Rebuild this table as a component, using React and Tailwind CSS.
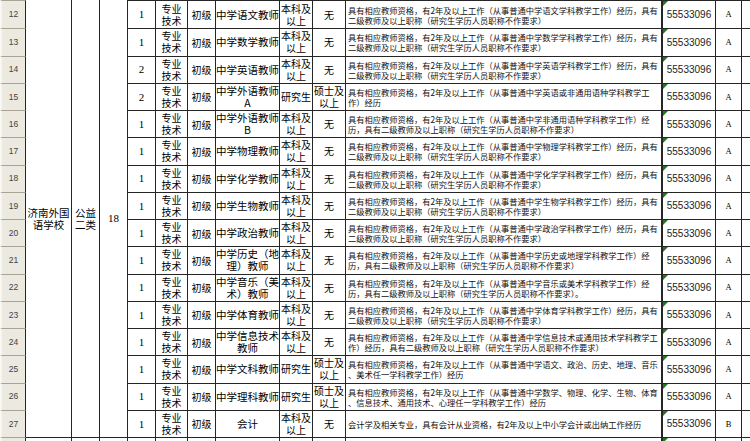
import React from "react";

const teachReq = (subject) => [
  `具有相应教师资格，有2年及以上工作（从事普通中学${subject}学科教学工作）经历，具有`,
  "二级教师及以上职称（研究生学历人员职称不作要求）",
];

const rows = [
  { n: 12, count: 1, pos: ["中学语文教师"], edu: ["本科及", "以上"], deg: ["无"], req: teachReq("语文"), cls: "A" },
  { n: 13, count: 1, pos: ["中学数学教师"], edu: ["本科及", "以上"], deg: ["无"], req: teachReq("数学"), cls: "A" },
  { n: 14, count: 2, pos: ["中学英语教师"], edu: ["本科及", "以上"], deg: ["无"], req: teachReq("英语"), cls: "A" },
  {
    n: 15, count: 2, pos: ["中学外语教师", "A"], edu: ["研究生"], deg: ["硕士及", "以上"],
    req: ["具有相应教师资格，有2年及以上工作（从事普通中学英语或非通用语种学科教学工", "作）经历"], cls: "A",
  },
  {
    n: 16, count: 1, pos: ["中学外语教师", "B"], edu: ["本科及", "以上"], deg: ["无"],
    req: ["具有相应教师资格，有2年及以上工作（从事普通中学非通用语种学科教学工作）经", "历，具有二级教师及以上职称（研究生学历人员职称不作要求）"], cls: "A",
  },
  { n: 17, count: 1, pos: ["中学物理教师"], edu: ["本科及", "以上"], deg: ["无"], req: teachReq("物理"), cls: "A" },
  { n: 18, count: 1, pos: ["中学化学教师"], edu: ["本科及", "以上"], deg: ["无"], req: teachReq("化学"), cls: "A" },
  { n: 19, count: 1, pos: ["中学生物教师"], edu: ["本科及", "以上"], deg: ["无"], req: teachReq("生物"), cls: "A" },
  { n: 20, count: 1, pos: ["中学政治教师"], edu: ["本科及", "以上"], deg: ["无"], req: teachReq("政治"), cls: "A" },
  {
    n: 21, count: 1, pos: ["中学历史（地", "理）教师"], edu: ["本科及", "以上"], deg: ["无"],
    req: ["具有相应教师资格，有2年及以上工作（从事普通中学历史或地理学科教学工作）经", "历，具有二级教师及以上职称（研究生学历人员职称不作要求）"], cls: "A",
  },
  {
    n: 22, count: 1, pos: ["中学音乐（美", "术）教师"], edu: ["本科及", "以上"], deg: ["无"],
    req: ["具有相应教师资格，有2年及以上工作（从事普通中学音乐或美术学科教学工作）经", "历，具有二级教师及以上职称（研究生学历人员职称不作要求）。"], cls: "A",
  },
  { n: 23, count: 1, pos: ["中学体育教师"], edu: ["本科及", "以上"], deg: ["无"], req: teachReq("体育"), cls: "A" },
  {
    n: 24, count: 1, pos: ["中学信息技术", "教师"], edu: ["本科及", "以上"], deg: ["无"],
    req: ["具有相应教师资格，有2年及以上工作（从事普通中学信息技术或通用技术学科教学工", "作）经历，具有二级教师及以上职称（研究生学历人员职称不作要求）"], cls: "A",
  },
  {
    n: 25, count: 1, pos: ["中学文科教师"], edu: ["研究生"], deg: ["硕士及", "以上"],
    req: ["具有相应教师资格，有2年及以上工作（从事普通中学语文、政治、历史、地理、音乐", "、美术任一学科教学工作）经历"], cls: "A",
  },
  {
    n: 26, count: 1, pos: ["中学理科教师"], edu: ["研究生"], deg: ["硕士及", "以上"],
    req: ["具有相应教师资格，有2年及以上工作（从事普通中学数学、物理、化学、生物、体育", "、信息技术、通用技术、心理任一学科教学工作）经历"], cls: "A",
  },
  {
    n: 27, count: 1, pos: ["会计"], edu: ["本科及", "以上"], deg: ["无"],
    req: ["会计学及相关专业，具有会计从业资格，有2年及以上中小学会计或出纳工作经历"], cls: "B",
  },
];

const cell = "border-r border-b border-[#262626] flex flex-col items-center justify-center text-center overflow-hidden";

const Lines = ({ lines }) =>
  lines.map((l, i) => (
    <span key={i} className="block whitespace-nowrap">
      {l}
    </span>
  ));

const TextFlag = () => (
  <svg className="absolute left-0 top-0" width="5" height="5" viewBox="0 0 5 5">
    <polygon points="0,0 5,0 0,5" fill="#1f7a1f" />
  </svg>
);

const RowHead = ({ n, first }) => (
  <div
    className={`flex items-center justify-center border-r border-b border-r-[#262626] border-b-[#a8a597] bg-[#ebe9e0] border-l-2 border-l-[#f7f6f1] font-['Liberation_Sans',sans-serif] text-[8.5px] text-[#444] ${first ? "border-t border-t-[#a8a597]" : ""}`}
  >
    {n}
  </div>
);

const Row = ({ r, first }) => {
  const t = first ? "border-t" : "";
  return (
    <>
      <RowHead n={r.n} first={first} />
      {first && (
        <>
          <div className={`${cell} row-span-16 text-[10.5px] leading-[12px]`}>
            <Lines lines={["济南外国", "语学校"]} />
          </div>
          <div className={`${cell} row-span-16 text-[10.5px] leading-[12px]`}>
            <Lines lines={["公益", "二类"]} />
          </div>
          <div className={`${cell} row-span-16 font-['Liberation_Serif',serif] text-[11px]`}>18</div>
        </>
      )}
      <div className={`${cell} ${t} font-['Liberation_Serif',serif] text-[11px]`}>{r.count}</div>
      <div className={`${cell} ${t} text-[10px] leading-[12px]`}>
        <Lines lines={["专业", "技术"]} />
      </div>
      <div className={`${cell} ${t} text-[10px]`}>初级</div>
      <div className={`${cell} ${t} text-[10.5px] leading-[12px]`}>
        <Lines lines={r.pos} />
      </div>
      <div className={`${cell} ${t} text-[10px] leading-[12px]`}>
        <Lines lines={r.edu} />
      </div>
      <div className={`${cell} ${t} text-[10px] leading-[12px]`}>
        <Lines lines={r.deg} />
      </div>
      <div className={`${cell} ${t} !items-start !text-left pl-[2px] text-[8.25px] leading-[10px] text-[#111] !border-r-2`}>
        <Lines lines={r.req} />
      </div>
      <div className={`${cell} ${t} relative font-['Liberation_Sans',sans-serif] text-[10px] text-[#222]`}>
        <TextFlag />
        55533096
      </div>
      <div className={`${cell} ${t} font-['Liberation_Serif',serif] text-[8.5px]`}>{r.cls}</div>
      <div className={`${cell} ${t}`} />
    </>
  );
};

export default function App() {
  return (
    <div className="h-[441px] w-[750px] overflow-hidden bg-white text-black font-['Noto_Sans_CJK_SC',sans-serif]">
      <div className="grid w-[751px] grid-cols-[26px_46px_28px_28px_28px_32px_28px_64px_33px_33px_317px_53px_26px_9px] grid-rows-[29.25px_repeat(15,27.25px)_27px]">
        {rows.map((r, i) => (
          <Row key={r.n} r={r} first={i === 0} />
        ))}
        <RowHead n="" />
        {Array.from({ length: 13 }).map((_, i) => (
          <div key={i} className={`${cell} ${i === 9 ? "!border-r-2" : ""} ${i === 10 ? "relative" : ""}`}>
            {i === 10 && <TextFlag />}
          </div>
        ))}
      </div>
    </div>
  );
}
